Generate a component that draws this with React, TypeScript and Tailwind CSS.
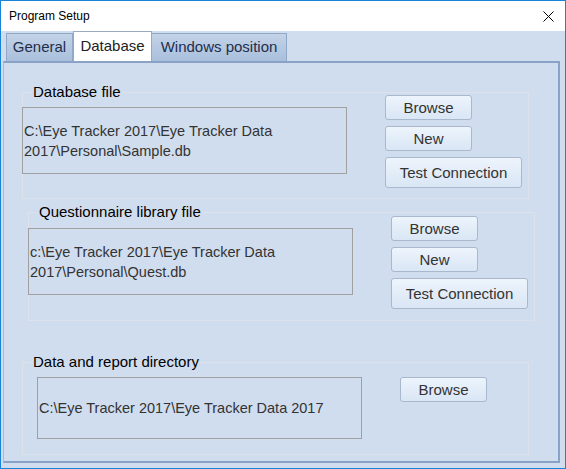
import React from 'react'

const font = { fontFamily: '"Segoe UI", "Liberation Sans", Arial, sans-serif' }

function Btn({ label, wide }: { label: string; wide?: boolean }) {
  return (
    <button
      className={`${wide ? 'w-[137px] h-[31px]' : 'w-[87px] h-[25px]'} rounded-[3px] border border-[#a9b8cc] bg-gradient-to-b from-[#edf4fc] to-[#d9e6f5] text-[15px] leading-none text-[#333] flex items-center justify-center`}
    >
      {label}
    </button>
  )
}

function PathBox({ lines, className }: { lines: string[]; className: string }) {
  return (
    <div
      className={`${className} w-[325px] shrink-0 border border-[#a0a0a0] pl-[1px] flex flex-col justify-center text-[14.5px] leading-[20px] text-[#333] whitespace-nowrap overflow-hidden`}
    >
      {lines.map((l) => (
        <div key={l}>{l}</div>
      ))}
    </div>
  )
}

function Group({
  title,
  className,
  children,
}: {
  title: string
  className: string
  children: React.ReactNode
}) {
  return (
    <div className={`relative w-[507px] border border-[#dde2ea] ${className}`}>
      {/* legend sits over the top border */}
      <span className="absolute left-[9px] top-[-11px] px-[1px] bg-[#d0ddee] text-[15px] leading-[20px] text-black">
        {title}
      </span>
      {children}
    </div>
  )
}

export default function App() {
  return (
    <div
      style={font}
      className="w-[566px] h-[469px] border border-[#1883d7] bg-[#d0ddee] flex flex-col overflow-hidden"
    >
      {/* Title bar */}
      <div className="h-[30px] shrink-0 bg-white flex items-center justify-between pl-[8px] pr-[10px]">
        <span className="text-[12px] text-black">Program Setup</span>
        <svg width="11" height="11" viewBox="0 0 11 11" className="mr-[1px]">
          <path d="M0.5 0.5 L10.5 10.5 M10.5 0.5 L0.5 10.5" stroke="#000" strokeWidth="1" />
        </svg>
      </div>

      {/* Tabs */}
      <div className="h-[30px] shrink-0 flex items-end pl-[5px] text-[15px] text-[#1f2e4c]">
        <div className="h-[28px] w-[67px] border border-b-0 border-[#90a8c8] bg-gradient-to-b from-[#c3d3e8] to-[#a9bfdb] flex items-center justify-center">
          General
        </div>
        <div className="h-[30px] w-[79px] border border-b-0 border-[#9aabc0] bg-white flex items-center justify-center text-[#222]">
          Database
        </div>
        <div className="h-[28px] w-[135px] border border-b-0 border-l-0 border-[#90a8c8] bg-gradient-to-b from-[#c3d3e8] to-[#a9bfdb] flex items-center justify-center">
          Windows position
        </div>
      </div>

      {/* Tab panel */}
      <div className="ml-[2px] w-[557px] h-[402px] shrink-0 border-t-2 border-r-2 border-b-2 border-l border-t-[#8aa2c5] border-r-[#8aa2c5] border-b-[#8aa2c5] border-l-[#a9bcd7] flex flex-col">
        <Group title="Database file" className="ml-[18px] mt-[29px] h-[107px]">
          <div className="flex items-start">
            <PathBox
              className="ml-[-1px] mt-[14px] h-[67px]"
              lines={['C:\\Eye Tracker 2017\\Eye Tracker Data', '2017\\Personal\\Sample.db']}
            />
            <div className="ml-[38px] mt-[2px] flex flex-col gap-[6px]">
              <Btn label="Browse" />
              <Btn label="New" />
              <Btn label="Test Connection" wide />
            </div>
          </div>
        </Group>

        <Group title="Questionnaire library file" className="ml-[24px] mt-[13px] h-[109px]">
          <div className="flex items-start">
            <PathBox
              className="ml-[-1px] mt-[15px] h-[67px]"
              lines={['c:\\Eye Tracker 2017\\Eye Tracker Data', '2017\\Personal\\Quest.db']}
            />
            <div className="ml-[38px] mt-[3px] flex flex-col gap-[6px]">
              <Btn label="Browse" />
              <Btn label="New" />
              <Btn label="Test Connection" wide />
            </div>
          </div>
        </Group>

        <Group title="Data and report directory" className="ml-[18px] mt-[41px] h-[93px]">
          <div className="flex items-start">
            <PathBox
              className="ml-[14px] mt-[14px] h-[62px]"
              lines={['C:\\Eye Tracker 2017\\Eye Tracker Data 2017']}
            />
            <div className="ml-[38px] mt-[14px]">
              <Btn label="Browse" />
            </div>
          </div>
        </Group>
      </div>
    </div>
  )
}
